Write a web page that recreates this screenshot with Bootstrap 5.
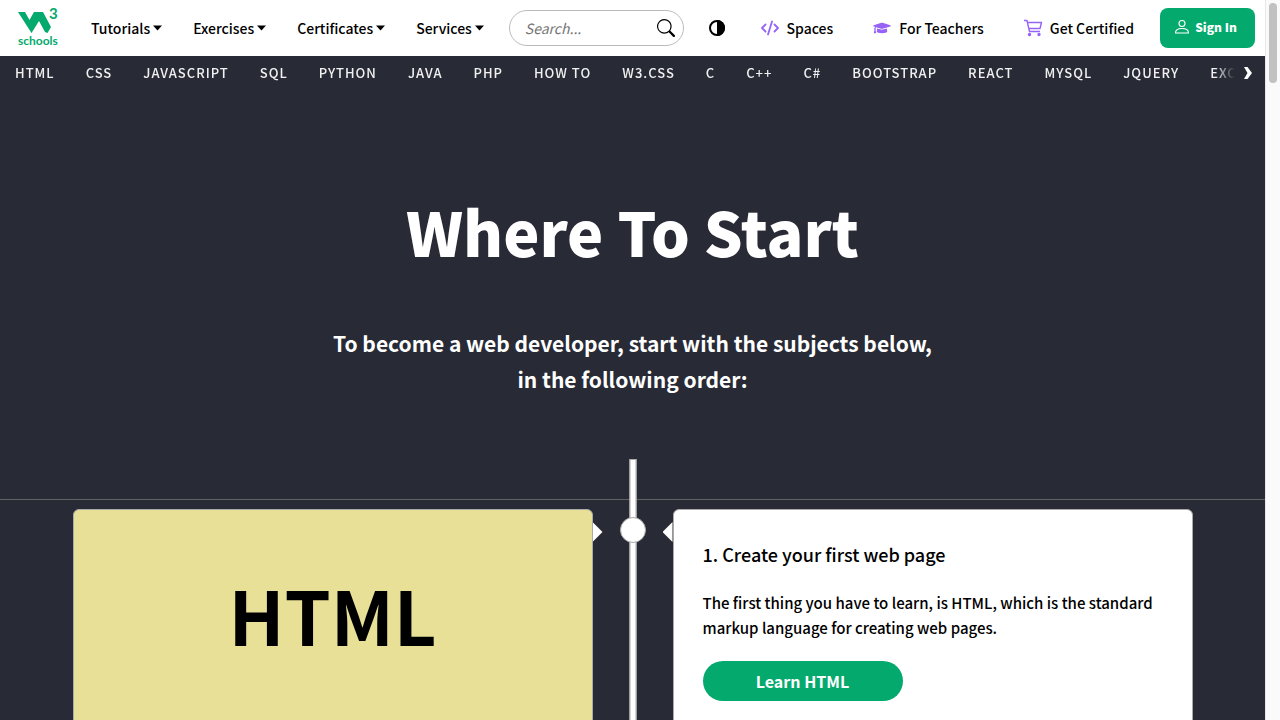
<!DOCTYPE html>
<html lang="en">
<head>
<meta charset="utf-8">
<meta name="viewport" content="width=device-width, initial-scale=1">
<title>Where To Start</title>
<link href="https://cdn.jsdelivr.net/npm/bootstrap@5.3.0/dist/css/bootstrap.min.css" rel="stylesheet">
<style>
  :root { --green: #04aa6d; --ink: #282a35; --violet: #9763f6; }
  body { font-family: "Noto Sans CJK SC", sans-serif; font-size: 15px; line-height: 24px; color: #000; background: var(--ink); }
  a { text-decoration: none; }
  svg { display: block; flex: none; overflow: visible; }
  .topbar { height: 56px; padding: 0 10px 0 16px; font-size: 14px; font-weight: 500; }
  .topbar a, .topbar button { color: #000; white-space: nowrap; }
  .menus { gap: 31px; margin-left: 31px; }
  .plain-btn { border: 0; background: none; padding: 0; gap: 3px; font-weight: inherit; }
  .search { width: 175px; height: 36px; margin-left: 25px; border: 1px solid #bbb; border-radius: 18px; padding: 0 8px 0 15px; }
  .search input { width: 100px; border: 0; outline: 0; padding: 0; background: none; }
  .search input::placeholder { color: #757575; font-style: italic; opacity: 1; }
  .extras { gap: 40px; margin-right: 26px; }
  .extras a { gap: 8px; }
  .extras .plain-btn { margin-right: -4px; }
  .extras svg { color: var(--violet); }
  .topbar .sign { height: 40px; width: 95px; gap: 5px; border: 0; border-radius: 8px; background: var(--green); color: #fff; font-size: 12px; font-weight: 900; padding: 0 4px 2px 0; }
  .subjects { height: 34px; }
  .subjects .strip { gap: 31px; padding-left: 15px; -webkit-mask-image: linear-gradient(90deg, #000 calc(100% - 20px), transparent); mask-image: linear-gradient(90deg, #000 calc(100% - 20px), transparent); }
  .subjects a { color: #f1f1f1; font-size: 13px; font-weight: 500; letter-spacing: 1px; white-space: nowrap; }
  .next { color: #fff; width: 30px; padding: 0 0 0 9px; }
  .hero { padding: 93px 16px 62px; }
  .hero h1 { font-size: 61px; line-height: 96px; font-weight: 900; margin: 0 0 46px; }
  .hero p { font-size: 21px; line-height: 36px; font-weight: 600; margin: 0; }
  .rail { position: absolute; top: 0; bottom: 0; left: 50%; width: 7px; transform: translateX(-50%); background: #fff; border: 1px solid #aaa; }
  .rule-space { height: 41px; border-bottom: 1px solid #616161; }
  .steps { display: grid; grid-template-columns: 1fr 80px 1fr; max-width: 1120px; margin: 9px auto 0; }
  .panel { min-height: 300px; border: 1px solid #aaa; border-radius: 6px; background: #fff; }
  .panel.sand { background: #e9e098; }
  .big { font-size: 74px; line-height: 96px; font-weight: 700; padding-top: 56px; }
  .middle { padding-top: 8px; }
  .node { width: 26px; height: 26px; border-radius: 50%; background: #fff; border: 1px solid #aaa; }
  .tip { width: 10px; height: 20px; margin-top: 5px; background: #fff; }
  .tip-l { clip-path: polygon(0 0, 100% 50%, 0 100%); }
  .tip-r { clip-path: polygon(100% 0, 0 50%, 100% 100%); }
  .lesson { padding: 29px; font-weight: 500; }
  .lesson h2 { font-size: 18px; line-height: 30px; font-weight: 500; margin: 0 0 21px; }
  .lesson p { line-height: 25px; margin: 0 0 21px; }
  .learn { width: 200px; height: 40px; background: var(--green); color: #fff; font-size: 16px; font-weight: 600; }
  .scrollrail { width: 15px; background: #fafafa; border-left: 1px solid #e8e8e8; padding: 3px 3px 0; }
  .thumb { height: 80px; border-radius: 4px; background: #c1c1c1; }
</style>
</head>
<body>
<div class="d-flex vh-100 overflow-hidden">
  <div class="flex-grow-1 overflow-hidden">
    <header class="topbar bg-white d-flex align-items-center">
      <a href="#" aria-label="W3Schools home">
        <svg width="44" height="48" viewBox="-2 -3 44 48" fill="#04aa6d">
          <path d="M0 5h7l4.500 8L16 5h9l8 15-3.500 6L27 25l-6-11L13.500 26z"/>
          <text x="31" y="12" font-family="Lato" font-weight="700" font-size="15">3</text>
          <text x="0" y="38" font-family="Lato" font-weight="700" font-size="12">schools</text>
        </svg>
      </a>
      <nav class="menus d-flex">
        <button class="plain-btn d-flex align-items-center">Tutorials<svg width="9" height="6" viewBox="0 0 9 6"><path d="M0 0.500h9L4.500 5.500z"/></svg></button>
        <button class="plain-btn d-flex align-items-center">Exercises<svg width="9" height="6" viewBox="0 0 9 6"><path d="M0 0.500h9L4.500 5.500z"/></svg></button>
        <button class="plain-btn d-flex align-items-center">Certificates<svg width="9" height="6" viewBox="0 0 9 6"><path d="M0 0.500h9L4.500 5.500z"/></svg></button>
        <button class="plain-btn d-flex align-items-center">Services<svg width="9" height="6" viewBox="0 0 9 6"><path d="M0 0.500h9L4.500 5.500z"/></svg></button>
      </nav>
      <form class="search d-flex align-items-center justify-content-between">
        <input type="text" placeholder="Search..." aria-label="Search">
        <button type="button" class="plain-btn" aria-label="Search"><svg width="18" height="18" viewBox="0 0 16 16"><path d="M11.742 10.344a6.500 6.500 0 1 0-1.397 1.398h-.001c.03.04.062.078.098.115l3.850 3.850a1 1 0 0 0 1.415-1.414l-3.850-3.850a1.007 1.007 0 0 0-.115-.1zM12 6.500a5.500 5.500 0 1 1-11 0 5.500 5.500 0 0 1 11 0z"/></svg></button>
      </form>
      <div class="extras d-flex align-items-center ms-auto">
        <button class="plain-btn" aria-label="Dark mode"><svg width="16" height="16" viewBox="0 0 16 16"><circle cx="8" cy="8" r="7" fill="none" stroke="#000" stroke-width="2"/><path fill="#000" d="M8 0a8 8 0 0 1 0 16z"/></svg></button>
        <a href="#" class="d-flex align-items-center"><svg width="18" height="16" viewBox="0 0 18 16" fill="none" stroke="currentColor" stroke-width="1.800" stroke-linecap="round" stroke-linejoin="round"><path d="M4.500 4.500L1 8l3.500 3.500M13.500 4.500L17 8l-3.500 3.500M11 1.500l-4 13"/></svg>Spaces</a>
        <a href="#" class="d-flex align-items-center"><svg width="18" height="14" viewBox="0 0 640 512" fill="currentColor"><path d="M622 153L343 67c-15-5-31-5-46 0L18 153c-24 7-24 39 0 46l49 15c-11 13-17 29-18 47-10 6-17 16-17 28 0 11 6 21 15 27L21 430c-2 10 5 19 15 19h56c10 0 17-9 15-19L81 316c9-6 15-16 15-27s-6-21-15-27c1-15 8-29 21-37l195 60c9 3 27 6 46 0l279-86c24-7 24-39 0-46zM352 315c-32 10-57 3-65 0l-145-44-14 113c0 35 86 64 192 64s192-29 192-64l-14-113z"/></svg>For Teachers</a>
        <a href="#" class="d-flex align-items-center"><svg width="18" height="18" viewBox="0 0 18 18" fill="none" stroke="currentColor" stroke-width="1.400" stroke-linejoin="round"><path d="M0 1.500h3l2.500 11H16M3.500 3.500h14L16 9.500H5"/><circle cx="5.500" cy="15.500" r="1" fill="currentColor"/><circle cx="15" cy="15.500" r="1" fill="currentColor"/></svg>Get Certified</a>
      </div>
      <button class="sign d-flex align-items-center justify-content-center"><svg width="16" height="16" viewBox="0 0 16 16" fill="none" stroke="#fff" stroke-width="1.100"><circle cx="8" cy="4.500" r="3"/><path d="M1.500 14c0-3 2.500-4.500 6.500-4.500s6.500 1.500 6.500 4.500z" stroke-linejoin="round"/></svg>Sign In</button>
    </header>
    <nav class="subjects d-flex align-items-center">
      <div class="strip d-flex flex-grow-1 overflow-hidden">
        <a href="#">HTML</a><a href="#">CSS</a><a href="#">JAVASCRIPT</a><a href="#">SQL</a><a href="#">PYTHON</a><a href="#">JAVA</a><a href="#">PHP</a><a href="#">HOW TO</a><a href="#">W3.CSS</a><a href="#">C</a><a href="#">C++</a><a href="#">C#</a><a href="#">BOOTSTRAP</a><a href="#">REACT</a><a href="#">MYSQL</a><a href="#">JQUERY</a><a href="#">EXCEL</a>
      </div>
      <button class="plain-btn next" aria-label="Scroll right"><svg width="8" height="12" viewBox="0 0 8 12" fill="#fff"><path d="M0 0h3.500L8 6l-4.500 6H0l3.500-6z"/></svg></button>
    </nav>
    <section class="hero text-center text-white">
      <h1>Where To Start</h1>
      <p>To become a web developer, start with the subjects below,<br>in the following order:</p>
    </section>
    <section class="position-relative">
      <div class="rule-space"></div>
      <div class="rail"></div>
      <div class="steps">
        <div class="panel sand text-center"><div class="big">HTML</div></div>
        <div class="middle d-flex justify-content-between position-relative">
          <div class="tip tip-l"></div><div class="node"></div><div class="tip tip-r"></div>
        </div>
        <article class="panel lesson">
          <h2>1. Create your first web page</h2>
          <p>The first thing you have to learn, is HTML, which is the standard markup language for creating web pages.</p>
          <a href="#" class="learn d-flex align-items-center justify-content-center rounded-pill">Learn HTML</a>
        </article>
      </div>
    </section>
  </div>
  <div class="scrollrail flex-shrink-0" aria-hidden="true"><div class="thumb"></div></div>
</div>
<script src="https://cdn.jsdelivr.net/npm/bootstrap@5.3.0/dist/js/bootstrap.bundle.min.js"></script>
</body>
</html>
